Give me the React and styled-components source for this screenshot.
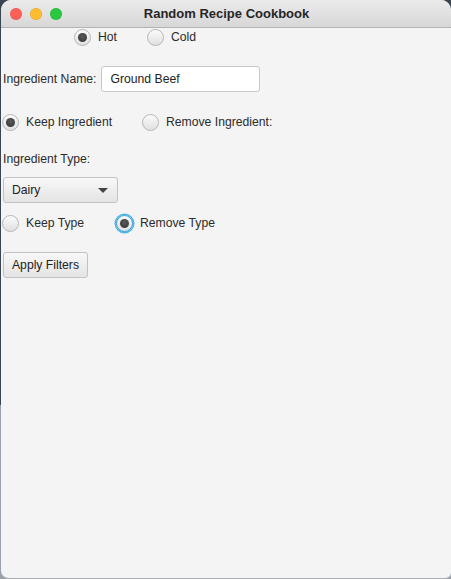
import React from "react";
import styled, { createGlobalStyle, css } from "styled-components";

const Global = createGlobalStyle`
  html, body { margin: 0; padding: 0; }
  body {
    width: 451px;
    height: 579px;
    overflow: hidden;
    background: linear-gradient(to bottom, #3b4550 0px, #3b4550 405px, #9ba1a8 405px, #9ba1a8 579px);
    font-family: "Liberation Sans", Arial, sans-serif;
  }
`;

const Window = styled.div`
  margin-left: 1px;
  width: 450px;
  height: 578px;
  background: #f4f4f4;
  border-radius: 10px 10px 6px 8px;
  overflow: hidden;
  display: flex;
  flex-direction: column;
  border-bottom: 1px solid #a9aeb4;
`;

const TitleBar = styled.div`
  height: 27px;
  flex: none;
  position: relative;
  display: flex;
  align-items: center;
  justify-content: center;
  background: linear-gradient(to bottom, #ebebeb, #d7d7d7);
  border-bottom: 1px solid #b4b4b4;
`;

const Lights = styled.div`
  position: absolute;
  left: 9px;
  top: 8px;
  display: flex;
  gap: 8px;
`;

const Light = styled.span`
  width: 12px;
  height: 12px;
  border-radius: 50%;
  background: ${(p) => p.$c};
  box-shadow: inset 0 0 0 0.5px rgba(0, 0, 0, 0.12);
`;

const Title = styled.div`
  font-weight: bold;
  font-size: 13px;
  color: #262626;
  margin-left: 1px;
`;

const Content = styled.div`
  display: flex;
  flex-direction: column;
  color: #2b2b2b;
  font-size: 12.2px;
`;

const Row = styled.div`
  display: flex;
  align-items: center;
  height: ${(p) => p.$h || 16}px;
  margin-top: ${(p) => p.$mt || 0}px;
  padding-left: ${(p) => p.$pl || 0}px;
  gap: ${(p) => p.$gap || 0}px;
`;

const RadioItem = styled.label`
  display: flex;
  align-items: center;
  gap: 7px;
  width: ${(p) => (p.$w ? p.$w + "px" : "auto")};
`;

const Circle = styled.span`
  width: 17px;
  height: 17px;
  box-sizing: border-box;
  border-radius: 50%;
  border: 1px solid #b6b6b6;
  background: linear-gradient(to bottom, #fbfbfb, #e0e0e0);
  display: flex;
  align-items: center;
  justify-content: center;
  flex: none;
  ${(p) =>
    p.$focus &&
    css`
      border-color: #2a9fd6;
      box-shadow: 0 0 0 1.5px #4fb6e6;
    `}
  &::after {
    content: "";
    width: 9px;
    height: 9px;
    border-radius: 50%;
    background: radial-gradient(circle at 50% 40%, #5a5a5a, #333);
    display: ${(p) => (p.$on ? "block" : "none")};
  }
`;

const Radio = ({ on, focus, children, w }) => (
  <RadioItem $w={w}>
    <Circle $on={on} $focus={focus} />
    <span>{children}</span>
  </RadioItem>
);

const Label = styled.span`
  white-space: nowrap;
`;

const TextField = styled.div`
  box-sizing: border-box;
  width: 159px;
  height: 26px;
  border: 1px solid #c8c8c8;
  border-radius: 3px;
  background: #fff;
  display: flex;
  align-items: center;
  padding-left: 9px;
  color: #222;
`;

const Combo = styled.div`
  box-sizing: border-box;
  width: 115px;
  height: 26px;
  border: 1px solid #c2c2c2;
  border-radius: 3px;
  background: linear-gradient(to bottom, #f8f8f8, #e4e4e4);
  display: flex;
  align-items: center;
  justify-content: space-between;
  padding: 0 9px 0 8px;
  color: #222;
`;

const Arrow = styled.span`
  width: 0;
  height: 0;
  border-left: 5px solid transparent;
  border-right: 5px solid transparent;
  border-top: 5px solid #444;
`;

const Button = styled.div`
  box-sizing: border-box;
  width: 85px;
  height: 26px;
  border: 1px solid #c2c2c2;
  border-radius: 3px;
  background: linear-gradient(to bottom, #f8f8f8, #e4e4e4);
  display: flex;
  align-items: center;
  justify-content: center;
  color: #222;
`;

export default function App() {
  return (
    <>
      <Global />
      <Window>
        <TitleBar>
          <Lights>
            <Light $c="#fe5f57" />
            <Light $c="#febc2e" />
            <Light $c="#28c840" />
          </Lights>
          <Title>Random Recipe Cookbook</Title>
        </TitleBar>
        <Content>
          <Row $mt={1} $pl={73}>
            <Radio on w={73}>Hot</Radio>
            <Radio>Cold</Radio>
          </Row>
          <Row $h={26} $mt={21} $pl={2} $gap={4}>
            <Label>Ingredient Name:</Label>
            <TextField>Ground Beef</TextField>
          </Row>
          <Row $mt={22} $pl={1}>
            <Radio on w={140}>Keep Ingredient</Radio>
            <Radio>Remove Ingredient:</Radio>
          </Row>
          <Row $mt={21} $pl={2}>
            <Label>Ingredient Type:</Label>
          </Row>
          <Row $h={26} $mt={10} $pl={2}>
            <Combo>
              <span>Dairy</span>
              <Arrow />
            </Combo>
          </Row>
          <Row $mt={12} $pl={1}>
            <Radio w={114}>Keep Type</Radio>
            <Radio on focus>Remove Type</Radio>
          </Row>
          <Row $h={26} $mt={21} $pl={2}>
            <Button>Apply Filters</Button>
          </Row>
        </Content>
      </Window>
    </>
  );
}
